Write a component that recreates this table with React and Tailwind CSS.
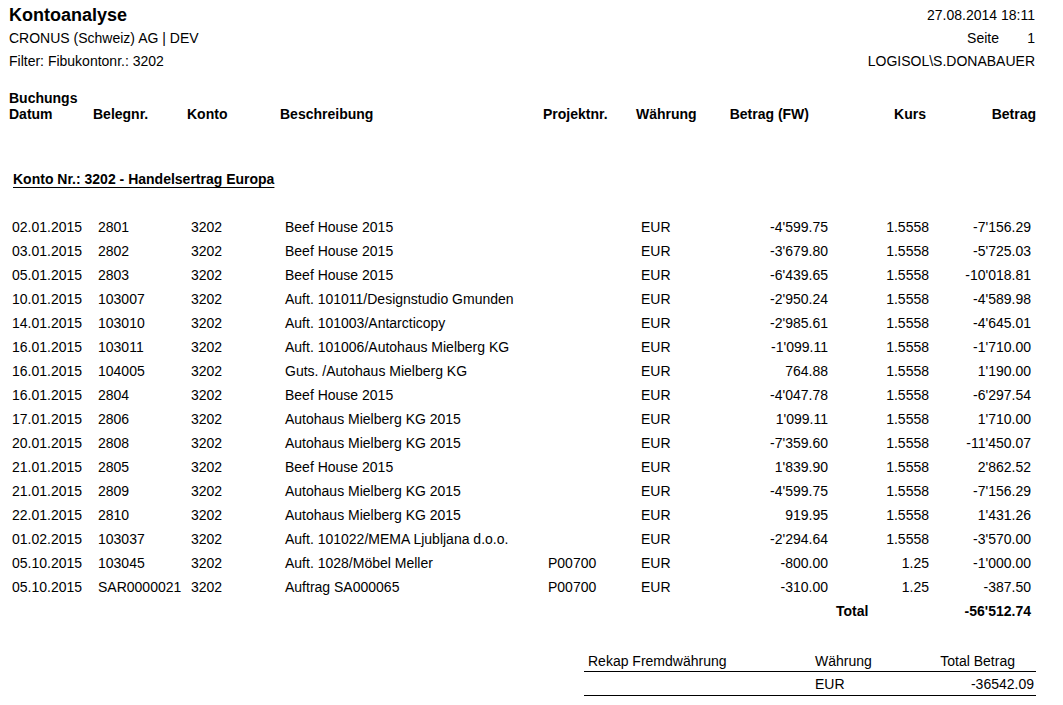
import React from "react";

const rows = [
  ["02.01.2015", "2801", "3202", "Beef House 2015", "", "EUR", "-4'599.75", "1.5558", "-7'156.29"],
  ["03.01.2015", "2802", "3202", "Beef House 2015", "", "EUR", "-3'679.80", "1.5558", "-5'725.03"],
  ["05.01.2015", "2803", "3202", "Beef House 2015", "", "EUR", "-6'439.65", "1.5558", "-10'018.81"],
  ["10.01.2015", "103007", "3202", "Auft. 101011/Designstudio Gmunden", "", "EUR", "-2'950.24", "1.5558", "-4'589.98"],
  ["14.01.2015", "103010", "3202", "Auft. 101003/Antarcticopy", "", "EUR", "-2'985.61", "1.5558", "-4'645.01"],
  ["16.01.2015", "103011", "3202", "Auft. 101006/Autohaus Mielberg KG", "", "EUR", "-1'099.11", "1.5558", "-1'710.00"],
  ["16.01.2015", "104005", "3202", "Guts. /Autohaus Mielberg KG", "", "EUR", "764.88", "1.5558", "1'190.00"],
  ["16.01.2015", "2804", "3202", "Beef House 2015", "", "EUR", "-4'047.78", "1.5558", "-6'297.54"],
  ["17.01.2015", "2806", "3202", "Autohaus Mielberg KG 2015", "", "EUR", "1'099.11", "1.5558", "1'710.00"],
  ["20.01.2015", "2808", "3202", "Autohaus Mielberg KG 2015", "", "EUR", "-7'359.60", "1.5558", "-11'450.07"],
  ["21.01.2015", "2805", "3202", "Beef House 2015", "", "EUR", "1'839.90", "1.5558", "2'862.52"],
  ["21.01.2015", "2809", "3202", "Autohaus Mielberg KG 2015", "", "EUR", "-4'599.75", "1.5558", "-7'156.29"],
  ["22.01.2015", "2810", "3202", "Autohaus Mielberg KG 2015", "", "EUR", "919.95", "1.5558", "1'431.26"],
  ["01.02.2015", "103037", "3202", "Auft. 101022/MEMA Ljubljana d.o.o.", "", "EUR", "-2'294.64", "1.5558", "-3'570.00"],
  ["05.10.2015", "103045", "3202", "Auft. 1028/Möbel Meller", "P00700", "EUR", "-800.00", "1.25", "-1'000.00"],
  ["05.10.2015", "SAR0000021", "3202", "Auftrag SA000065", "P00700", "EUR", "-310.00", "1.25", "-387.50"],
];

export default function App() {
  return (
    <div className="w-[1063px] h-[705px] overflow-hidden bg-white text-black font-['Liberation_Sans',Arial,sans-serif] text-[14px]">
      {/* Page header */}
      <div className="flex justify-between pl-[9px] pr-[28px] pt-[4px]">
        <div className="flex flex-col">
          <div className="h-[23px] leading-[23px] text-[18px] font-bold">Kontoanalyse</div>
          <div className="h-[23px] leading-[23px]">CRONUS (Schweiz) AG | DEV</div>
          <div className="h-[23px] leading-[23px]">Filter: Fibukontonr.: 3202</div>
        </div>
        <div className="flex flex-col items-end">
          <div className="h-[23px] leading-[23px]">27.08.2014 18:11</div>
          <div className="h-[23px] leading-[23px] flex">
            <span>Seite</span>
            <span className="w-[36px] text-right">1</span>
          </div>
          <div className="h-[23px] leading-[23px]">LOGISOL\S.DONABAUER</div>
        </div>
      </div>

      {/* Column headers */}
      <div className="mt-[17px] pl-[9px] grid grid-cols-[84px_94px_93px_263px_93px_80px_93px_117px_110px] font-bold leading-[16px] items-end">
        <div>Buchungs<br />Datum</div>
        <div>Belegnr.</div>
        <div>Konto</div>
        <div>Beschreibung</div>
        <div>Projektnr.</div>
        <div>Währung</div>
        <div className="text-right">Betrag (FW)</div>
        <div className="text-right">Kurs</div>
        <div className="text-right">Betrag</div>
      </div>

      {/* Account group heading */}
      <div className="mt-[49px] pl-[13px] h-[16px] leading-[16px] font-bold">
        <span className="underline underline-offset-[3px] decoration-1">Konto Nr.: 3202 - Handelsertrag Europa</span>
      </div>

      {/* Data rows */}
      <div className="mt-[28px] pl-[12px]">
        {rows.map((r, i) => (
          <div
            key={i}
            className="grid grid-cols-[86px_93px_94px_263px_93px_59px_128px_101px_102px] h-[24px] leading-[24px] whitespace-nowrap"
          >
            <div>{r[0]}</div>
            <div>{r[1]}</div>
            <div>{r[2]}</div>
            <div>{r[3]}</div>
            <div>{r[4]}</div>
            <div>{r[5]}</div>
            <div className="text-right">{r[6]}</div>
            <div className="text-right">{r[7]}</div>
            <div className="text-right">{r[8]}</div>
          </div>
        ))}
        <div className="grid grid-cols-[86px_93px_94px_263px_93px_59px_128px_101px_102px] h-[24px] leading-[24px] font-bold">
          <div className="col-start-8 pl-[8px]">Total</div>
          <div className="text-right">-56'512.74</div>
        </div>
      </div>

      {/* Recap */}
      <div className="mt-[27px] ml-[584px] w-[452px]">
        <div className="grid grid-cols-[227px_1fr_auto] h-[22px] leading-[22px] border-b border-black pl-[4px] pr-[21px]">
          <div>Rekap Fremdwährung</div>
          <div>Währung</div>
          <div className="text-right">Total Betrag</div>
        </div>
        <div className="grid grid-cols-[227px_1fr_auto] h-[24px] leading-[24px] border-b border-black pl-[4px] pr-[2px]">
          <div></div>
          <div>EUR</div>
          <div className="text-right">-36542.09</div>
        </div>
      </div>
    </div>
  );
}
